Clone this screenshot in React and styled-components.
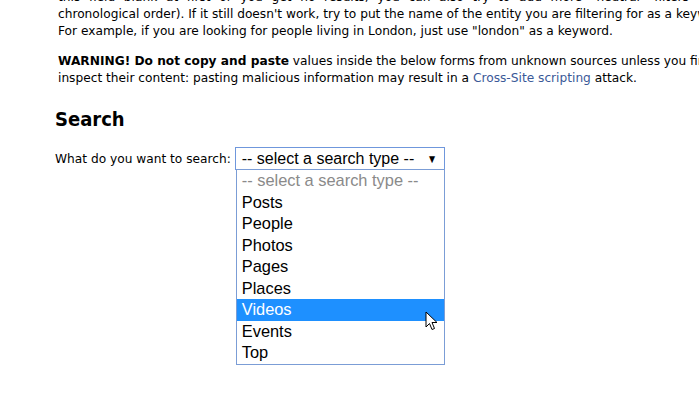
import React from 'react'
import styled, { createGlobalStyle, css } from 'styled-components'

const GlobalStyle = createGlobalStyle`
  html, body {
    margin: 0;
    padding: 0;
    background: #fff;
    overflow: hidden;
  }
`

const Page = styled.div`
  width: 699px;
  height: 417px;
  overflow: hidden;
  padding-left: 55px;
  box-sizing: border-box;
  font-family: 'DejaVu Sans', Verdana, sans-serif;
  font-size: 12.2px;
  color: #000;
`

const Paragraph = styled.div`
  padding-left: 3px;
  line-height: 17px;
  width: 700px;

  &:first-child {
    margin-top: -11px;
  }

  & + & {
    margin-top: 13px;
  }
`

const Line = styled.span`
  display: block;
  white-space: nowrap;

  ${({ $justify }) =>
    $justify &&
    css`
      white-space: normal;
      text-align: justify;
      text-align-last: justify;
    `}
`

const Link = styled.a`
  color: #3b5998;
  text-decoration: none;
`

const Heading = styled.h2`
  margin: 20px 0 0;
  font-family: 'DejaVu Sans Condensed', 'DejaVu Sans', sans-serif;
  font-size: 20px;
  line-height: 24px;
  font-weight: bold;
`

const FormRow = styled.div`
  display: flex;
  align-items: center;
  gap: 4px;
  margin-top: 16px;
`

const Label = styled.label`
  white-space: nowrap;
`

const SelectWrap = styled.div`
  position: relative;
`

const SelectBox = styled.div`
  width: 210px;
  height: 23px;
  box-sizing: border-box;
  border: 1px solid #6f97dc;
  display: flex;
  align-items: center;
  justify-content: space-between;
  padding: 0 6px 0 6px;
  font-family: 'Liberation Sans', Arial, sans-serif;
  font-size: 16px;
  color: #000;
`

const Arrow = styled.span`
  font-size: 12px;
  line-height: 1;
  transform: scaleX(0.85);
`

const ListBox = styled.ul`
  position: absolute;
  top: 22px;
  left: 1px;
  width: 209px;
  box-sizing: border-box;
  margin: 0;
  padding: 0;
  list-style: none;
  background: #fff;
  border: 1px solid #7b9dd6;
  font-family: 'Liberation Sans', Arial, sans-serif;
  font-size: 16.4px;
`

const Option = styled.li`
  height: 21.5px;
  line-height: 21.5px;
  padding-left: 5px;
  white-space: nowrap;
  color: ${({ $placeholder }) => ($placeholder ? '#8a8a8a' : '#000')};

  ${({ $active }) =>
    $active &&
    css`
      background: #1e90ff;
      color: #fff;
    `}
`

const Cursor = styled.svg`
  position: absolute;
  left: 190px;
  top: 164px;
  width: 14px;
  height: 21px;
`

const options = ['Posts', 'People', 'Photos', 'Pages', 'Places', 'Videos', 'Events', 'Top']

const App = () => (
  <>
    <GlobalStyle />
    <Page>
      <Paragraph>
        <Line $justify>
          this field blank at first or you get no results, you can also try to add more "neutral" filters (from old
        </Line>
        <Line>
          chronological order). If it still doesn't work, try to put the name of the entity you are filtering for as a keyword.
        </Line>
        <Line>For example, if you are looking for people living in London, just use "london" as a keyword.</Line>
      </Paragraph>
      <Paragraph>
        <Line>
          <b>WARNING! Do not copy and paste</b> values inside the below forms from unknown sources unless you first
        </Line>
        <Line>
          inspect their content: pasting malicious information may result in a <Link href="#">Cross-Site scripting</Link> attack.
        </Line>
      </Paragraph>
      <Heading>Search</Heading>
      <FormRow>
        <Label htmlFor="type">What do you want to search:</Label>
        <SelectWrap>
          <SelectBox id="type">
            <span>-- select a search type --</span>
            <Arrow>▼</Arrow>
          </SelectBox>
          <ListBox>
            <Option $placeholder>-- select a search type --</Option>
            {options.map((o) => (
              <Option key={o} $active={o === 'Videos'}>
                {o}
              </Option>
            ))}
          </ListBox>
          <Cursor viewBox="0 0 14 21">
            <path
              d="M1 1 L1 16 L4.5 12.5 L7 18.5 L9.5 17.5 L7 11.5 L12 11.5 Z"
              fill="#fff"
              stroke="#000"
              strokeWidth="1"
              strokeLinejoin="miter"
            />
          </Cursor>
        </SelectWrap>
      </FormRow>
    </Page>
  </>
)

export default App
